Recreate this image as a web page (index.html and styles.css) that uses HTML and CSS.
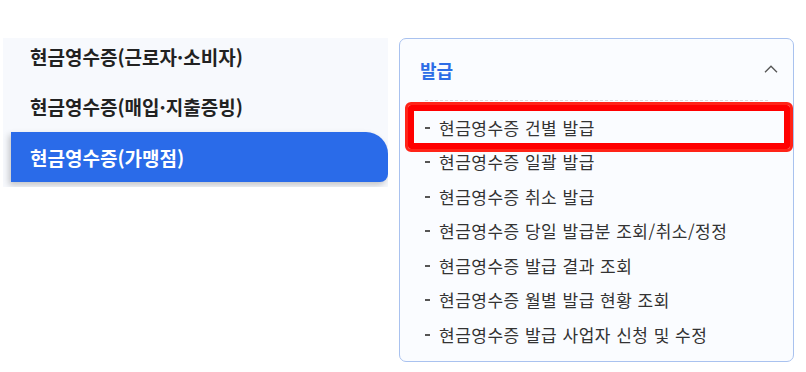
FILE: index.html
```html
<!DOCTYPE html>
<html lang="ko">
<head>
<meta charset="UTF-8" />
<meta name="viewport" content="width=device-width, initial-scale=1" />
<title>현금영수증</title>
<link rel="stylesheet" href="styles.css">
</head>
<body>

<div class="page">
  <nav class="side-menu">
    <ul class="side-list">
      <li class="side-item">현금영수증(근로자·소비자)</li>
      <li class="side-item">현금영수증(매입·지출증빙)</li>
      <li class="side-item active">현금영수증(가맹점)</li>
    </ul>
  </nav>

  <section class="sub-menu">
    <div class="sub-head">
      <h2 class="sub-title">발급</h2>
      <svg class="chevron" width="14" height="8" viewBox="0 0 14 8">
        <path d="M1 7.2 L7 1.2 L13 7.2" fill="none" stroke="#555" stroke-width="1.3" />
      </svg>
    </div>
    <ul class="sub-list">
      <li class="sub-item marked">현금영수증 건별 발급</li>
      <li class="sub-item">현금영수증 일괄 발급</li>
      <li class="sub-item">현금영수증 취소 발급</li>
      <li class="sub-item">현금영수증 당일 발급분 조회/취소/정정</li>
      <li class="sub-item">현금영수증 발급 결과 조회</li>
      <li class="sub-item">현금영수증 월별 발급 현황 조회</li>
      <li class="sub-item">현금영수증 발급 사업자 신청 및 수정</li>
    </ul>
  </section>
</div>

</body>
</html>
```

FILE: styles.css
```css
/* Reset */
* {
  margin: 0; padding: 0; box-sizing: border-box;
}
html, body {
  background: #fff;
  font-family: "Noto Sans CJK KR", "Noto Sans", sans-serif;
  color: #222;
  overflow: hidden;
}
ul {
  list-style: none;
}
.page {
  display: flex;
  align-items: flex-start;
  gap: 11px;
  padding: 38px 12px 0 3px;
}

/* left menu */
.side-menu {
  width: 385px;
  height: 149px;
  background: #f7f9fd;
  overflow: hidden;
}
.side-list {
  margin-top: -7px;
}
.side-item {
  height: 50px;
  display: flex;
  align-items: center;
  padding-left: 27px;
  font-size: 19px;
  font-weight: 700;
  color: #222;
}
.side-item.active {
  margin: 1px 0 0 8px;
  padding-left: 19px;
  background: #2a6be9;
  color: #fff;
  border-radius: 0 22px 8px 0;
  box-shadow: -2px 3px 6px rgba(0 0 0 / 0.22);
}

/* right sub menu */
.sub-menu {
  flex: 1;
  height: 324px;
  background: #fafcff;
  border: 1px solid #a9c2ef;
  border-radius: 7px;
}
.sub-head {
  position: relative;
  height: 62px;
  display: flex;
  align-items: center;
  justify-content: space-between;
  padding: 0 15px 0 20px;
}
.sub-head::after {
  content: "";
  position: absolute;
  left: 25px;
  right: 25px;
  bottom: 0;
  border-bottom: 1px dashed #dcdcdc;
}
.sub-title {
  font-size: 18px;
  font-weight: 700;
  color: #2d6de6;
}
.chevron {
  margin-top: -3px;
}
.sub-list {
  padding: 9px 0 9px 25px;
}
.sub-item {
  position: relative;
  height: 34.5px;
  display: flex;
  align-items: center;
  gap: 9px;
  font-size: 17px;
  letter-spacing: 0.5px;
  color: #333;
}
.sub-item::before {
  content: "";
  width: 5px;
  height: 2px;
  background: #555;
  margin-top: 1px;
}
.sub-item.marked::after {
  content: "";
  position: absolute;
  top: -8px;
  bottom: -7px;
  left: -20px;
  right: 0;
  border: 3px solid #ff2418;
  box-shadow: inset 0 0 0 6px #ff0000;
  border-radius: 6px;
}
```
